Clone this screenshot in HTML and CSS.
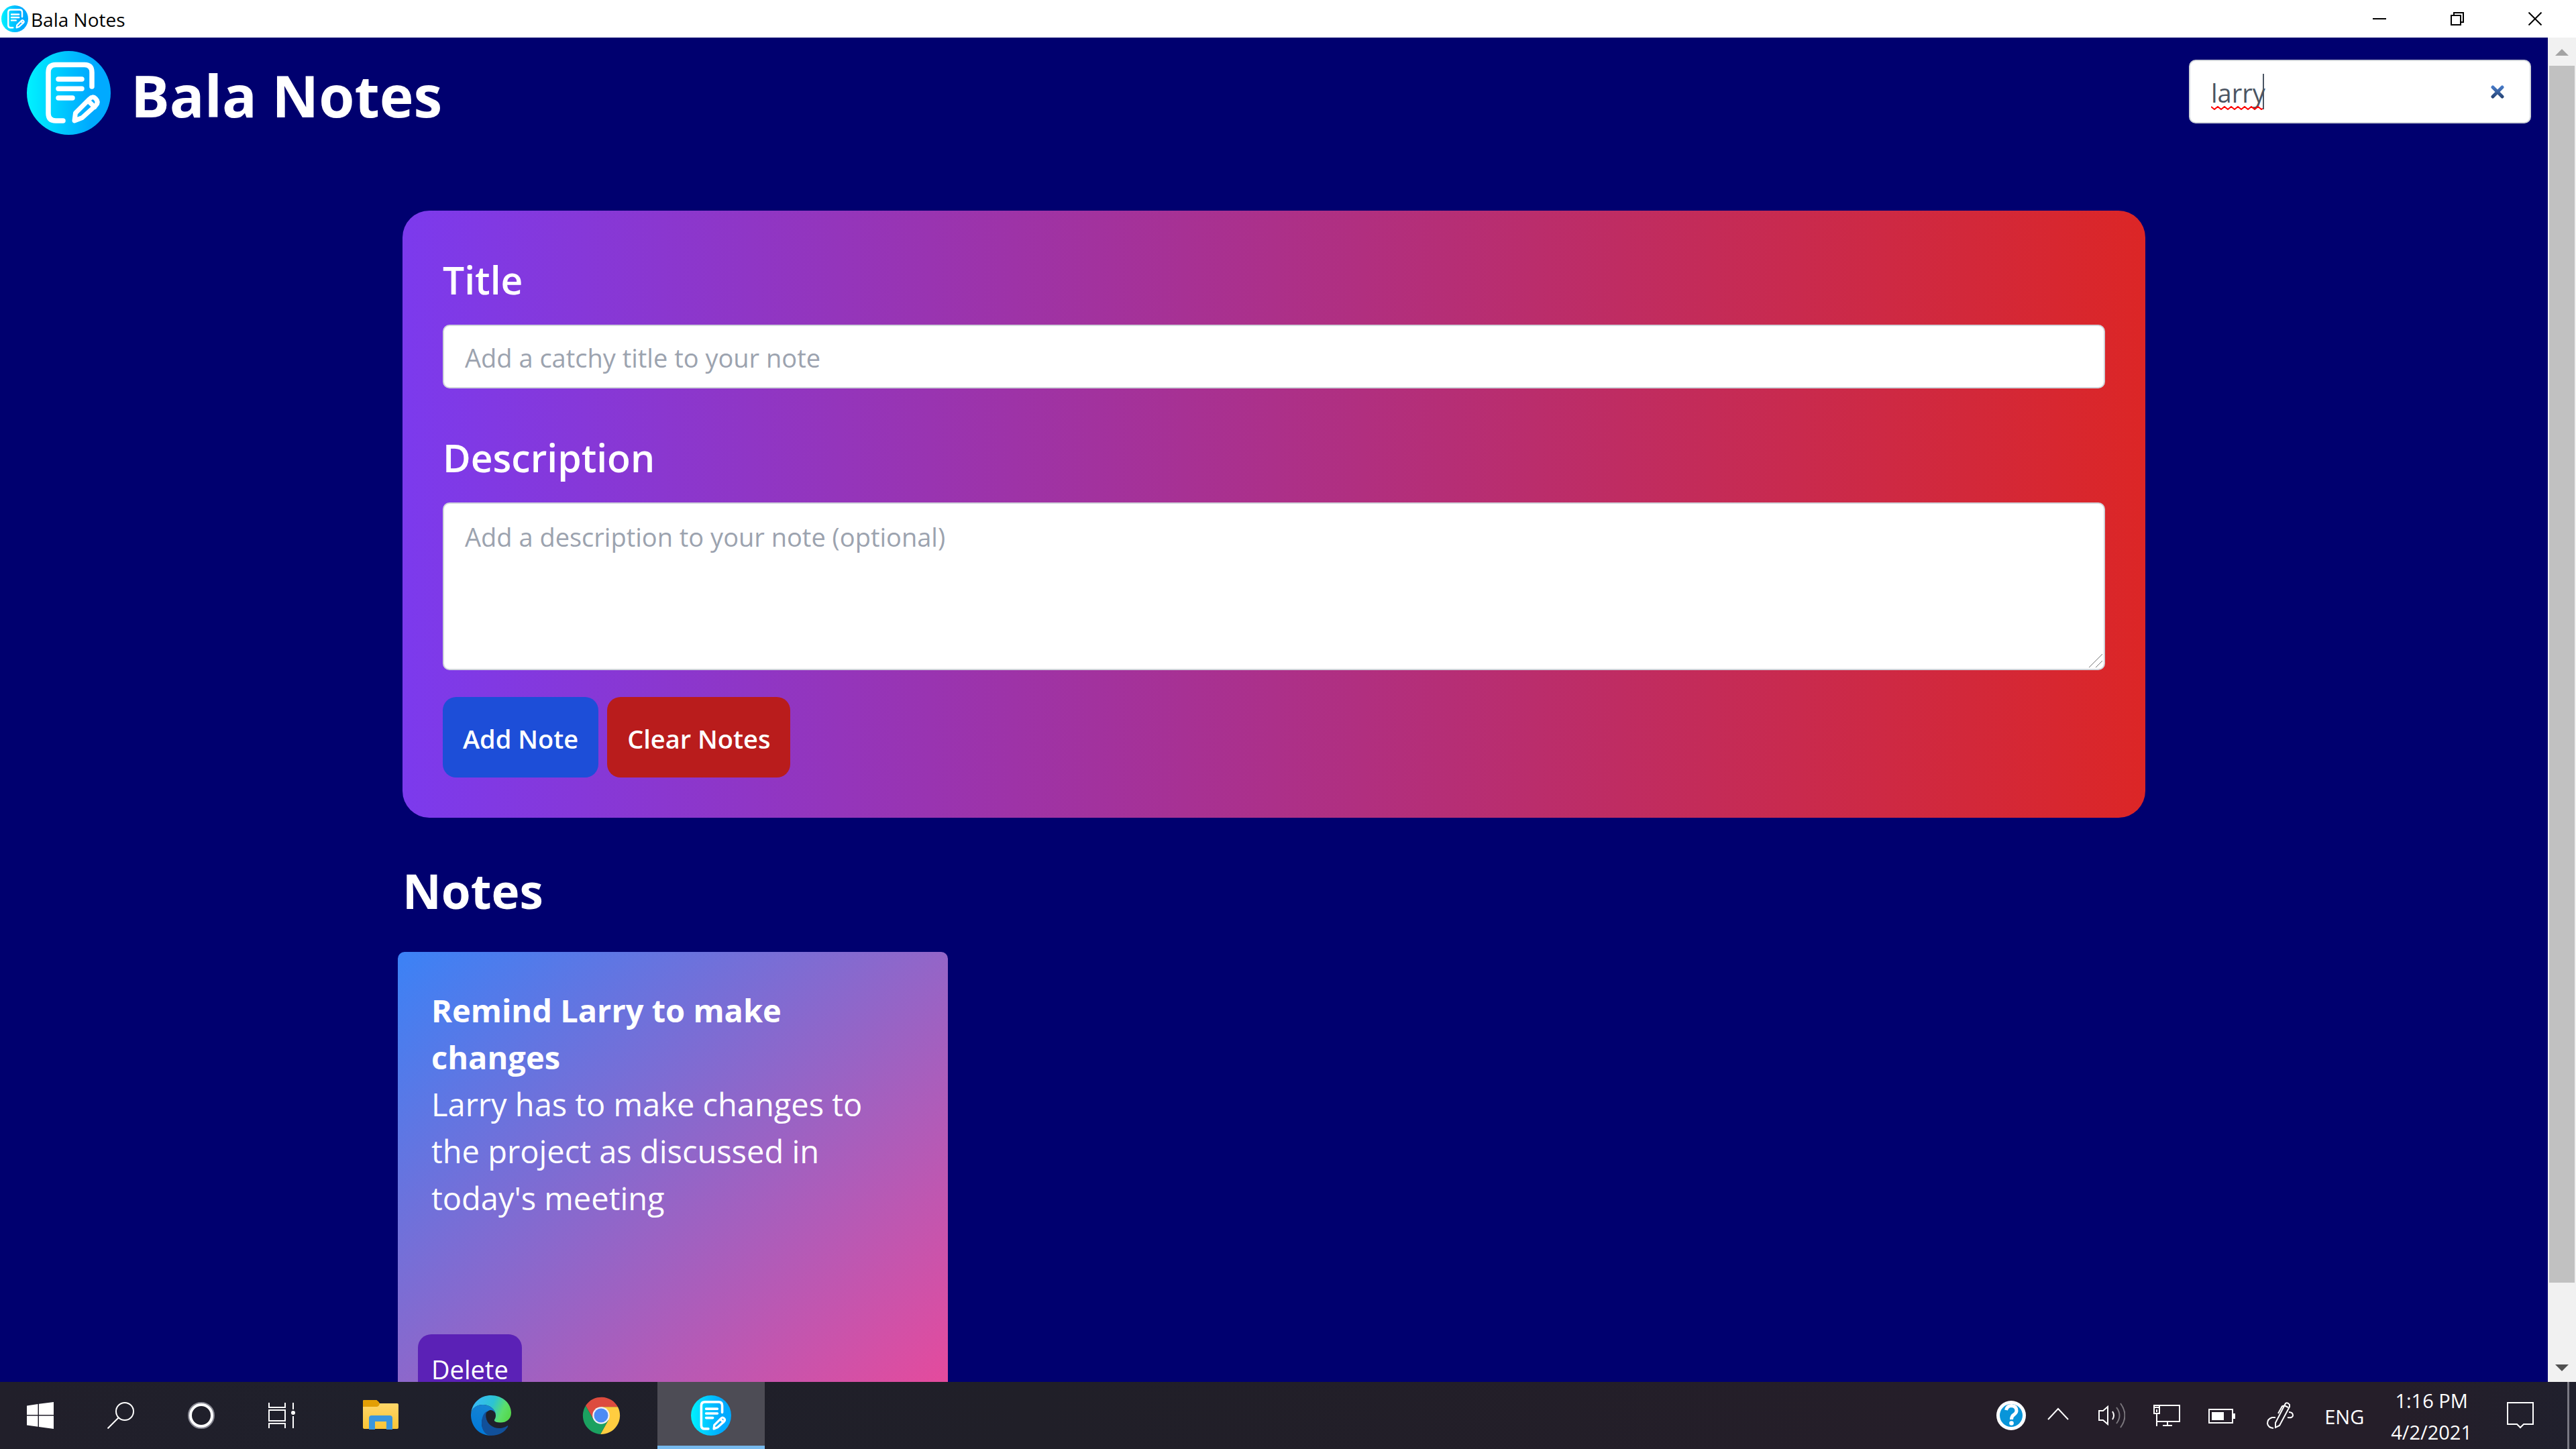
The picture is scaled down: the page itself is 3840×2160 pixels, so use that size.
FILE: index.html
```html
<!DOCTYPE html>
<html lang="en">
<head>
  <meta charset="utf-8">
  <title>Bala Notes</title>
  <link rel="stylesheet" href="styles.css">
</head>
<body>
  <svg class="defs" aria-hidden="true">
    <defs>
      <linearGradient id="logo-fill" x1="0" x2="1" y1="0" y2="0">
        <stop offset="0" stop-color="#00f2ff"/>
        <stop offset="0.5" stop-color="#00c0ff"/>
        <stop offset="0.75" stop-color="#00aaff"/>
        <stop offset="1" stop-color="#00aaff"/>
      </linearGradient>
      <symbol id="logo" viewBox="0 0 125 125">
        <circle cx="62.5" cy="62.5" r="62.5" fill="url(#logo-fill)"/>
        <g fill="none" stroke="#fff" stroke-width="7.5" stroke-linecap="round" stroke-linejoin="round">
          <path d="M97 53V32q0-11.500-11-11.500H43q-11 0-11 11.500V93q0 11 11 11h11"/>
          <path d="M47 42h35M47 56.300h35M47 70h21"/>
          <path d="M71 104L72.500 92.500 93.500 71.500Q98 66.500 102.500 71 107.500 76 103 81L82.500 99.500ZM91.500 74.500l9.500 9" stroke-width="7"/>
        </g>
      </symbol>
    </defs>
  </svg>

  <header class="titlebar">
    <svg class="titlebar-logo"><use href="#logo"/></svg>
    <span class="titlebar-name">Bala Notes</span>
    <button class="window-button" aria-label="Minimize"><svg viewBox="0 0 20 20"><path d="M0 10h20"/></svg></button>
    <button class="window-button" aria-label="Restore"><svg viewBox="0 0 20 20"><path d="M1 5h14v14H1zM5 5V1h14v14h-4"/></svg></button>
    <button class="window-button" aria-label="Close"><svg viewBox="0 0 20 20"><path d="M0.500 0.500l19 19M19.500 0.500l-19 19"/></svg></button>
  </header>

  <div class="viewport">
    <main class="page">
      <div class="topbar">
        <svg class="brand-logo"><use href="#logo"/></svg>
        <h1 class="brand-name">Bala Notes</h1>
        <div class="search">
          <input class="search-input" type="text" value="larry" aria-label="Search notes" spellcheck="false">
          <button class="search-clear" aria-label="Clear search">
            <svg viewBox="0 0 20 20">
              <defs><linearGradient id="cross" x1="0" x2="0" y1="0" y2="20" gradientUnits="userSpaceOnUse"><stop offset="0" stop-color="#4a7fcf"/><stop offset="1" stop-color="#24406f"/></linearGradient></defs>
              <path d="M3 3l14 14M17 3L3 17" stroke="url(#cross)" stroke-width="5" stroke-linecap="round"/>
            </svg>
          </button>
          <svg class="search-squiggle" viewBox="0 0 77 6"><path d="M0 1l5 4 5-4 5 4 5-4 5 4 5-4 5 4 5-4 5 4 5-4 5 4 5-4 5 4 5-4 5 4 2-1"/></svg>
          <span class="search-caret"></span>
        </div>
      </div>

      <div class="content">
        <form class="note-form">
          <label class="field-label" for="title">Title</label>
          <input class="field" id="title" type="text" placeholder="Add a catchy title to your note">
          <label class="field-label" for="description">Description</label>
          <div class="field-area">
            <textarea class="field field-tall" id="description" placeholder="Add a description to your note (optional)"></textarea>
            <svg class="grip" viewBox="0 0 20 20"><path d="M0 20L20 0M10 20L20 10"/></svg>
          </div>
          <div class="actions">
            <button class="button button-add" type="button">Add Note</button>
            <button class="button button-clear" type="button">Clear Notes</button>
          </div>
        </form>

        <h2 class="notes-heading">Notes</h2>
        <div class="notes">
          <article class="note">
            <div class="note-body">
              <h3 class="note-title">Remind Larry to make changes</h3>
              <p class="note-text">Larry has to make changes to the project as discussed in today's meeting</p>
            </div>
            <button class="note-delete">Delete</button>
          </article>
        </div>
      </div>
    </main>
    <div class="scrollbar" aria-hidden="true">
      <svg class="scroll-arrow scroll-arrow-off" viewBox="0 0 42 42"><path d="M11 27L21 17 31 27z"/></svg>
      <div class="scroll-track"><div class="scroll-thumb"></div></div>
      <svg class="scroll-arrow" viewBox="0 0 42 42"><path d="M11 16h20L21 26z"/></svg>
    </div>
  </div>

  <footer class="taskbar">
    <div class="taskbar-tools">
      <button class="tool" aria-label="Start"><svg viewBox="0 0 40 40" fill="#fff"><path d="M0 5.500L16.500 3v16H0zM18 2.700L40 0v19H18zM0 20.500h16.500v16.300L0 34.500zM18 20.500h22V40l-22-3z"/></svg></button>
      <button class="tool" aria-label="Search"><svg viewBox="0 0 40 40" class="line"><circle cx="26" cy="14" r="13"/><path d="M16.500 23.500L0.500 39.500"/></svg></button>
      <button class="tool" aria-label="Cortana"><svg viewBox="0 0 40 40" class="line"><circle cx="20" cy="20" r="18.500" stroke="#888893" stroke-width="3"/><circle cx="20" cy="20" r="16" stroke-width="4"/></svg></button>
      <button class="tool" aria-label="Task view"><svg viewBox="0 0 40 40" class="line"><path d="M1 1v7h24V1M1 12h24v16H1zM1 39v-7h24v7M37 1v10M37 21v18"/><circle cx="37" cy="16" r="3" fill="#fff" stroke="none"/></svg></button>
    </div>
    <div class="taskbar-apps">
      <button class="app" aria-label="File Explorer">
        <svg class="app-icon" viewBox="0 0 60 60">
          <defs><linearGradient id="folder" x1="0" x2="0" y1="0" y2="1"><stop offset="0" stop-color="#ffd970"/><stop offset="1" stop-color="#fac536"/></linearGradient></defs>
          <path d="M3 9q0-2 2-2h18l5 5h26q2 0 2 2v34q0 2-2 2H5q-2 0-2-2z" fill="url(#folder)"/>
          <path d="M3 9q0-2 2-2h18q4 2 5 6-1 3-4 4H3z" fill="#e39f05"/>
          <path d="M12 51V34q0-4 4-4h27q4 0 4 4v17h-9V39H21v12z" fill="#3a96dd"/>
        </svg>
      </button>
      <button class="app" aria-label="Edge">
        <svg class="app-icon" viewBox="0 0 60 60">
          <defs>
            <linearGradient id="edge-a" x1="0" x2="1" y1="0.300" y2="0.600"><stop offset="0" stop-color="#39b9fb"/><stop offset="0.500" stop-color="#2cc3d3"/><stop offset="0.800" stop-color="#5bdf6b"/><stop offset="1" stop-color="#56d84e"/></linearGradient>
            <linearGradient id="edge-b" x1="0.600" x2="0.300" y1="0" y2="1"><stop offset="0" stop-color="#1684d3"/><stop offset="1" stop-color="#0078d9"/></linearGradient>
          </defs>
          <path d="M0 27C2 10 15 0 30 0 47 0 60 12 60 26 60 36 52 40.500 45 40.500 38 40.500 34 39 35 36.500 36 35 37 33 37 30 37 21 28 14 18 14 8 14 1 20 0 27Z" fill="url(#edge-a)"/>
          <path d="M0 29C0 20 8 14 18 14 28 14 37 21 37 30 37 25 33 22 29.500 22 24 22 16 32 16 42 16 50 22 58 30 60 12 60 0 46 0 29Z" fill="url(#edge-b)"/>
          <path d="M30 60C22 60 16 52 16 42 16 33 19 26 24 23.500 22 27 22 30 22.500 33 24 43 33 49 42 49 48 49 52 47 54 45.500 55.500 45 55.500 46 55 47 50 55 42 60 30 60Z" fill="#11509a"/>
        </svg>
      </button>
      <button class="app" aria-label="Chrome">
        <svg class="app-icon" viewBox="-2 -2 60 60">
          <path d="M28 28L16.900 34.400 5 13.400A28 28 0 0 1 53 15.200H28z" fill="#dd4b3e"/>
          <path d="M28 28V15.200H53A28 28 0 0 1 27 56L39.100 34.400z" fill="#ffcd40"/>
          <path d="M28 28L39.100 34.400 27 56A28 28 0 0 1 5 13.400L16.900 34.400z" fill="#1ba160"/>
          <circle cx="28" cy="28" r="12.800" fill="#f1f1f1"/><circle cx="28" cy="28" r="10.500" fill="#4c8bf5"/>
        </svg>
      </button>
      <button class="app app-current" aria-label="Bala Notes"><svg class="app-icon"><use href="#logo"/></svg></button>
    </div>
    <div class="tray">
      <button class="tray-help" aria-label="Help">
        <svg viewBox="0 0 44 44"><circle cx="22" cy="22" r="22" fill="#fff"/><circle cx="22" cy="22" r="17" fill="#0895d9"/><path d="M14.500 14Q16 7.500 22.500 7.500 30 8 30 15 30 18 26 21 22.500 23 22.500 28" fill="none" stroke="#fff" stroke-width="5"/><circle cx="22.500" cy="33.500" r="3.300" fill="#fff"/></svg>
      </button>
      <button class="tray-more" aria-label="Show hidden icons"><svg viewBox="0 0 32 40" class="line"><path d="M1 26l15-16 15 16"/></svg></button>
      <button class="tray-icon" aria-label="Volume"><svg viewBox="0 0 40 40" class="line"><path d="M1 13h6l7-6v26l-7-6H1zM21 14q4 6 0 12"/><path d="M27 8q9 12 0 24M33 2q13 18 0 36" stroke="#7b777d"/></svg></button>
      <button class="tray-icon" aria-label="Network"><svg viewBox="0 0 40 40" class="line"><path d="M5 5H39v24H5M1 5h8v12H1zM1 8h8M5 11v4M5 17v19M21 29v6M14 35h14"/></svg></button>
      <button class="tray-icon" aria-label="Battery"><svg viewBox="0 0 40 40" class="line"><path d="M1 11h35v20H1z"/><path d="M5 15h18v12H5zM36 17h4v8h-4z" fill="#fff" stroke="none"/></svg></button>
      <button class="tray-icon tray-pen" aria-label="Windows Ink"><svg viewBox="0 0 40 40" class="line"><path d="M13 38V31L28 2q3-2 6 2v3L19 35zM26 5l6 3M26 6q-3-1-4 2l-5 9M13 23H8Q1 25 1 32q1 6 9 7M33 15q6 0 6 5 0 4-8 3"/></svg></button>
      <button class="tray-language">ENG</button>
      <button class="tray-clock"><span>1:16 PM</span><span>4/2/2021</span></button>
      <button class="tray-icon" aria-label="Notifications"><svg viewBox="0 0 40 40" class="line"><path d="M1 1h38v32H25l-5 5-5-5H1z"/></svg></button>
      <span class="tray-edge"></span>
    </div>
  </footer>
</body>
</html>
```

FILE: styles.css
```css
* {
  box-sizing: border-box;
}

body {
  margin: 0;
  height: 100vh;
  display: flex;
  flex-direction: column;
  font-family: "Open Sans", "Noto Sans", sans-serif;
  font-size: 38px;
  line-height: 60px;
  color: #fff;
  background: #00006f;
}

button,
input,
textarea {
  font: inherit;
  color: inherit;
  margin: 0;
  padding: 0;
  border: 0;
  background: none;
}

h1,
h2,
h3,
p {
  margin: 0;
}

svg {
  display: block;
}

.defs {
  position: absolute;
  width: 0;
  height: 0;
}

.line {
  fill: none;
  stroke: #fff;
  stroke-width: 2;
}

/* Window title bar */

.titlebar {
  flex: none;
  display: flex;
  align-items: center;
  height: 56px;
  padding: 0 3px 0 2px;
  font-size: 28px;
  line-height: 40px;
  color: #000;
  background: #fff;
}

.titlebar-logo {
  width: 40px;
  height: 40px;
}

.titlebar-name {
  flex: 1;
  padding: 2px 0 0 4px;
}

.window-button {
  display: flex;
  justify-content: center;
  width: 116px;
}

.window-button svg {
  width: 20px;
  height: 20px;
  fill: none;
  stroke: #000;
  stroke-width: 2;
}

/* Page and scrollbar */

.viewport {
  flex: 1;
  min-height: 0;
  display: flex;
}

.page {
  flex: 1;
  overflow: hidden;
}

.scrollbar {
  display: flex;
  flex-direction: column;
  width: 42px;
  background: #f1f1f1;
}

.scroll-arrow {
  flex: none;
  height: 42px;
  fill: #505050;
}

.scroll-arrow-off {
  fill: #a3a3a3;
}

.scroll-track {
  flex: 1;
  padding: 0 2px;
}

.scroll-thumb {
  height: 94.5%;
  background: #c1c1c1;
}

/* Top bar */

.topbar {
  display: flex;
  align-items: center;
  gap: 30px;
  padding: 20px 25px 20px 40px;
}

.brand-logo {
  width: 125px;
  height: 125px;
}

.brand-name {
  flex: 1;
  padding-top: 6px;
  font-size: 86px;
  font-weight: 700;
  line-height: 100px;
}

.search {
  position: relative;
  display: flex;
  align-items: center;
  width: 510px;
  height: 95px;
  margin-bottom: 4px;
  padding: 0 38px 0 31px;
  border: 2px solid #d1d5db;
  border-radius: 10px;
  color: #4b5563;
  background: #fff;
}

.search-input {
  flex: 1;
  min-width: 0;
  height: 60px;
  padding-top: 2px;
  outline: 0;
}

.search-clear svg {
  width: 20px;
  height: 20px;
}

.search-squiggle {
  position: absolute;
  left: 31px;
  top: 67px;
  width: 77px;
  height: 6px;
  fill: none;
  stroke: #f00;
  stroke-width: 2;
}

.search-caret {
  position: absolute;
  left: 108px;
  top: 19px;
  width: 2px;
  height: 53px;
  background: #4b5563;
}

/* Note form */

.content {
  margin: 93px 600px 0;
}

.note-form {
  display: flex;
  flex-direction: column;
  padding: 60px;
  border-radius: 40px;
  background: linear-gradient(to right, #7c3aed, #dc2626);
}

.field-label {
  margin-bottom: 24px;
  font-size: 57px;
  font-weight: 600;
  line-height: 86px;
}

.field {
  width: 100%;
  height: 95px;
  padding: 3px 31px 0;
  border: 2px solid #d1d5db;
  border-radius: 10px;
  color: #374151;
  background: #fff;
}

.field::placeholder {
  color: #9ca3af;
  opacity: 1;
}

.field + .field-label {
  margin-top: 60px;
}

.field-area {
  position: relative;
}

.field-tall {
  display: block;
  height: 250px;
  padding: 19px 31px;
  resize: none;
}

.grip {
  position: absolute;
  right: 4px;
  bottom: 4px;
  width: 20px;
  height: 20px;
  fill: none;
  stroke: #777;
}

.actions {
  display: flex;
  gap: 13px;
  margin-top: 40px;
}

.button {
  padding: 32px 30px 28px;
  border-radius: 20px;
  font-weight: 600;
}

.button-add {
  background: #1d4ed8;
}

.button-clear {
  background: #b91c1c;
}

/* Notes */

.notes-heading {
  margin: 64px 0 46px;
  font-size: 71px;
  font-weight: 700;
  line-height: 90px;
}

.notes {
  display: grid;
  grid-template-columns: repeat(3, 1fr);
  gap: 50px;
  margin: 0 45px 0 -7px;
}

.note {
  display: flex;
  flex-direction: column;
  align-items: flex-start;
  justify-content: space-between;
  min-height: 700px;
  padding: 30px;
  border-radius: 10px;
  background: linear-gradient(to bottom right, #3b82f6, #ec4899);
}

.note-body {
  padding: 22px 20px;
  font-size: 47px;
  line-height: 70px;
}

.note-title {
  font-size: inherit;
  font-weight: 700;
}

.note-delete {
  padding: 22px 20px 18px;
  border-radius: 20px;
  background: #5b21b6;
}

/* Taskbar */

.taskbar {
  flex: none;
  display: flex;
  height: 100px;
  font-size: 29px;
  line-height: 47px;
  background: linear-gradient(to right, #211f2a, #1f202b 15%, #201f28 40%, #251e29 75%, #251e29 93%, #20202d);
}

.taskbar-tools,
.taskbar-apps,
.tray {
  display: flex;
  align-items: center;
}

.tool {
  display: flex;
  justify-content: center;
  width: 120px;
}

.tool svg,
.tray-icon svg {
  width: 40px;
  height: 40px;
}

.taskbar-apps {
  flex: 1;
  align-items: stretch;
  gap: 4px;
  padding-left: 8px;
}

.app {
  display: flex;
  align-items: center;
  justify-content: center;
  width: 160px;
}

.app-current {
  background: linear-gradient(#76b9ed, #76b9ed) bottom / 100% 5px no-repeat #4d4c55;
}

.app-icon {
  width: 60px;
  height: 60px;
}

.tray-help svg {
  width: 44px;
  height: 44px;
}

.tray-more {
  margin: 0 24px 0 32px;
}

.tray-more svg {
  width: 32px;
  height: 40px;
}

.tray-icon {
  margin: 0 20px;
}

.tray-icon + .tray-icon {
  margin-left: 22px;
}

.tray-icon + .tray-pen {
  margin-left: 27px;
}

.tray-language {
  margin: 0 20px 0 26px;
  padding-top: 2px;
}

.tray-clock {
  display: flex;
  flex-direction: column;
  align-items: center;
  margin: 0 32px 0 20px;
  padding-top: 2px;
}

.tray-edge {
  align-self: stretch;
  width: 13px;
  margin-left: 30px;
  border-left: 3px solid #7a7983;
}
```
